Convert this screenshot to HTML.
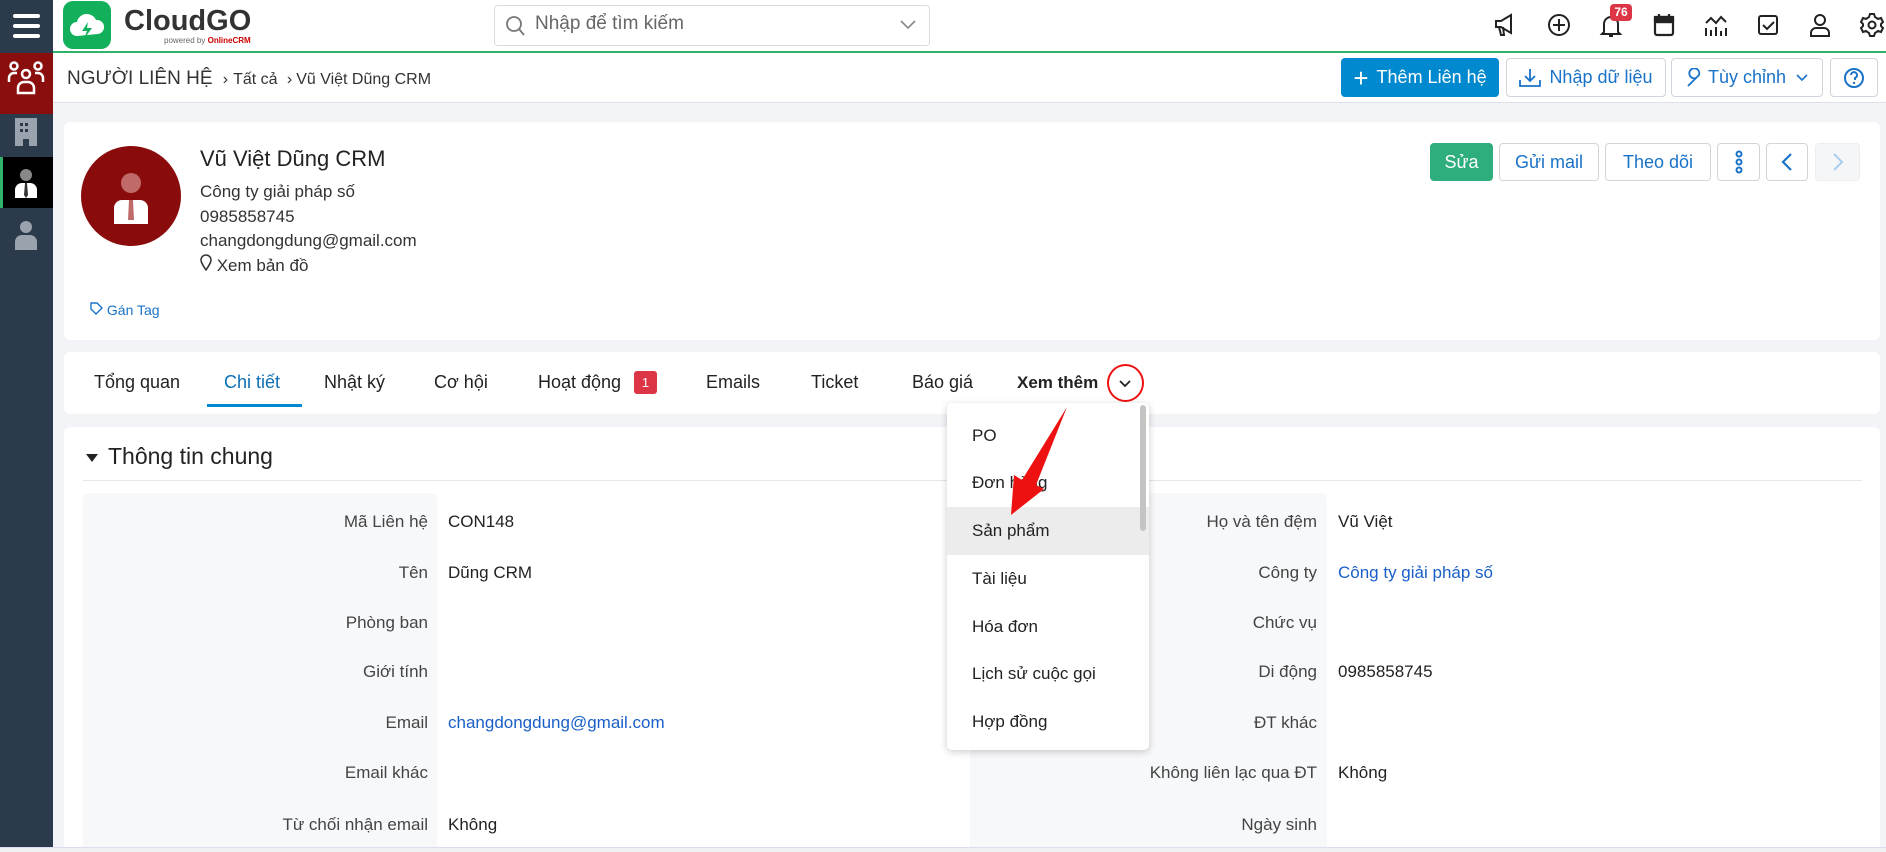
<!DOCTYPE html>
<html><head><meta charset="utf-8"><style>
*{box-sizing:border-box;margin:0;padding:0}
body{width:1886px;height:852px;overflow:hidden;background:#f2f4f7;font-family:"Liberation Sans","Noto Sans CJK SC",sans-serif;color:#222;position:relative}
.a{position:absolute}
.side{left:0;top:0;width:53px;height:852px;background:#2c3b4b}
.top{left:53px;top:0;width:1833px;height:53px;background:#fff;border-bottom:2px solid #2fb36b}
.crumb{left:53px;top:53px;width:1833px;height:50px;background:#fff;border-bottom:1px solid #dde1e6}
.btn{position:absolute;border:1px solid #d0d5db;border-radius:4px;background:#fff;color:#1a73c8;font-size:18px;display:flex;align-items:center;justify-content:center}
.card{position:absolute;background:#fff;border-radius:6px;left:64px;width:1816px}
.tab{position:absolute;top:372px;font-size:18px;color:#222}
.lab{position:absolute;font-size:17px;color:#444;text-align:right}
.val{position:absolute;font-size:17px;color:#222}
.dd{position:absolute;font-size:17px;color:#222;left:972px}
.ic{position:absolute;top:13px}
</style></head><body>
<div class="a side"></div>
<div class="a" style="left:13px;top:14px;width:27px;height:4px;background:#fff;border-radius:2px"></div>
<div class="a" style="left:13px;top:24px;width:27px;height:4px;background:#fff;border-radius:2px"></div>
<div class="a" style="left:13px;top:34px;width:27px;height:4px;background:#fff;border-radius:2px"></div>
<div class="a" style="left:0;top:53px;width:53px;height:61px;background:#8b0e0e"></div>
<svg class="a" style="left:6px;top:60px" width="40" height="36" viewBox="0 0 40 36" fill="none" stroke="#fff" stroke-width="2.5"><circle cx="8" cy="6" r="3.5"/><circle cx="32" cy="6" r="3.5"/><circle cx="20" cy="14" r="4"/><path d="M3 22v-4a5 5 0 0 1 5-5h3M37 22v-4a5 5 0 0 0-5-5h-3M12 33v-5a6 6 0 0 1 6-6h4a6 6 0 0 1 6 6v5z"/></svg>
<svg class="a" style="left:15px;top:118px" width="22" height="28" viewBox="0 0 22 28"><rect x="0" y="0" width="22" height="28" fill="#9aa3ad"/><g fill="#2c3b4b"><rect x="5" y="5" width="3" height="3"/><rect x="10" y="5" width="3" height="3"/><rect x="5" y="11" width="3" height="3"/><rect x="10" y="11" width="3" height="3"/><rect x="8" y="21" width="6" height="7"/></g></svg>
<div class="a" style="left:0;top:157px;width:53px;height:51px;background:#000;border-left:3px solid #2fb36b"></div>
<svg class="a" style="left:14px;top:168px" width="24" height="30" viewBox="0 0 24 30"><circle cx="12" cy="7" r="6" fill="#888"/><path d="M1 30v-8a7 7 0 0 1 7-7h8a7 7 0 0 1 7 7v8z" fill="#fff"/><path d="M11 15h2l1 12-2 3-2-3z" fill="#333"/></svg>
<svg class="a" style="left:14px;top:220px" width="24" height="30" viewBox="0 0 24 30" fill="#9aa3ad"><circle cx="12" cy="7" r="6"/><path d="M1 30v-8a7 7 0 0 1 7-7h8a7 7 0 0 1 7 7v8z"/></svg>

<div class="a top"></div>
<div class="a" style="left:63px;top:1px;width:48px;height:48px;background:#12b05a;border-radius:10px"></div>
<svg class="a" style="left:68px;top:10px" width="38" height="30" viewBox="0 0 38 30"><path d="M9 26a7 7 0 0 1 0-14 10 10 0 0 1 19-2 7 7 0 0 1 2 14" fill="#fff"/><path d="M20 12l-6 9h5l-3 8 8-11h-5z" fill="#12b05a"/></svg>
<div class="a" style="left:124px;top:5px;font-size:29px;font-weight:bold;color:#333">CloudGO</div>
<div class="a" style="left:164px;top:36px;font-size:8px;color:#666">powered by <span style="color:#c00;font-weight:bold">OnlineCRM</span></div>
<div class="a" style="left:494px;top:5px;width:436px;height:41px;border:1px solid #d8dce1;border-radius:4px;background:#fff"></div>
<svg class="a" style="left:505px;top:15px" width="20" height="22" fill="none" stroke="#777" stroke-width="1.8"><circle cx="9" cy="9" r="7"/><path d="M14 14l5 6"/></svg>
<div class="a" style="left:535px;top:13px;font-size:19px;color:#666">Nhập để tìm kiếm</div>
<svg class="a" style="left:900px;top:20px" width="16" height="10" fill="none" stroke="#888" stroke-width="1.6"><path d="M1 1l7 7 7-7"/></svg>
<svg class="ic" style="left:1494px" width="22" height="24" fill="none" stroke="#222" stroke-width="2"><path d="M2 8h5l10-6v18L7 14H2zM5 14l2 8h3l-1-8"/></svg>
<svg class="ic" style="left:1547px" width="24" height="24" fill="none" stroke="#222" stroke-width="2"><circle cx="12" cy="12" r="10"/><path d="M12 6v12M6 12h12"/></svg>
<svg class="ic" style="left:1599px" width="24" height="26" fill="none" stroke="#222" stroke-width="2"><path d="M5 19V11a7 7 0 0 1 14 0v8l2 2H3zM10 23h4"/></svg>
<div class="a" style="left:1610px;top:4px;width:22px;height:17px;background:#dc3545;border-radius:4px;color:#fff;font-size:12px;font-weight:bold;text-align:center;line-height:17px">76</div>
<svg class="ic" style="left:1653px" width="22" height="24" fill="none" stroke="#222" stroke-width="2.2"><rect x="2" y="4" width="18" height="18" rx="2"/><path d="M2 9h18M6 1v4M16 1v4"/><rect x="2" y="4" width="18" height="5" fill="#222"/></svg>
<svg class="ic" style="left:1704px" width="24" height="24" fill="none" stroke="#222" stroke-width="2"><path d="M2 23v-8M7 23v-6M12 23v-9M17 23v-5M22 23v-8M2 10l5-5 5 5 5-6 5 5"/></svg>
<svg class="ic" style="left:1757px" width="22" height="24" fill="none" stroke="#222" stroke-width="2"><rect x="2" y="3" width="18" height="18" rx="2"/><path d="M6 12l4 4 7-7"/></svg>
<svg class="ic" style="left:1809px" width="22" height="24" fill="none" stroke="#222" stroke-width="2"><circle cx="11" cy="7" r="5"/><path d="M2 23v-3a5 5 0 0 1 5-5h8a5 5 0 0 1 5 5v3z"/></svg>
<svg class="ic" style="left:1860px" width="24" height="24" fill="none" stroke="#222" stroke-width="2"><circle cx="12" cy="12" r="3.5"/><path d="M10 1h4l1 3 3 2 3-1 2 4-2 2v2l2 2-2 4-3-1-3 2-1 3h-4l-1-3-3-2-3 1-2-4 2-2v-2L1 9l2-4 3 1 3-2z"/></svg>

<div class="a crumb"></div>
<div class="a" style="left:67px;top:68px;font-size:19px;color:#333">NGƯỜI LIÊN HỆ <span style="font-size:16px;margin:0 5px">›</span><span style="font-size:16px">Tất cả</span> <span style="font-size:16px;margin:0 4px">›</span><span style="font-size:16px">Vũ Việt Dũng CRM</span></div>
<div class="btn" style="left:1341px;top:58px;width:158px;height:39px;background:#0089cf;border-color:#0089cf;color:#fff"><span style="font-size:26px;margin-right:8px;line-height:1">+</span>Thêm Liên hệ</div>
<div class="btn" style="left:1506px;top:58px;width:160px;height:39px"><svg width="22" height="20" fill="none" stroke="#1a73c8" stroke-width="1.8" style="margin-right:8px"><path d="M11 1v12M6 8l5 5 5-5M1 12v6h20v-6"/></svg>Nhập dữ liệu</div>
<div class="btn" style="left:1671px;top:58px;width:152px;height:39px"><svg width="20" height="20" fill="none" stroke="#1a73c8" stroke-width="1.8" style="margin-right:2px"><path d="M2 18l8-8a5 5 0 1 1 3-3L5 15z"/></svg>Tùy chỉnh&nbsp;&nbsp;<svg width="12" height="8" fill="none" stroke="#1a73c8" stroke-width="1.6"><path d="M1 1l5 5 5-5"/></svg></div>
<div class="btn" style="left:1830px;top:58px;width:48px;height:39px"><svg width="22" height="22" fill="none" stroke="#1a73c8" stroke-width="2"><circle cx="11" cy="11" r="9"/><path d="M8 8a3 3 0 1 1 4 3v2M11 15v2"/></svg></div>

<div class="card" style="top:122px;height:218px"></div>
<div class="a" style="left:81px;top:146px;width:100px;height:100px;border-radius:50%;background:#8a0b0b"></div>
<svg class="a" style="left:113px;top:170px" width="36" height="54"><circle cx="18" cy="13" r="10" fill="#c06a6a"/><path d="M1 54V38a8 8 0 0 1 8-8h18a8 8 0 0 1 8 8v16z" fill="#fff"/><path d="M16 30h4l1 20h-6z" fill="#c06a6a"/></svg>
<div class="a" style="left:200px;top:146px;font-size:22px;color:#222">Vũ Việt Dũng CRM</div>
<div class="a" style="left:200px;top:180px;font-size:17px;line-height:24.5px;color:#333">Công ty giải pháp số<br>0985858745<br>changdongdung@gmail.com<br><svg width="12" height="17" fill="none" stroke="#333" stroke-width="1.5"><path d="M6 16C2 10 1 8 1 6a5 5 0 0 1 10 0c0 2-1 4-5 10z"/></svg> Xem bản đồ</div>
<div class="a" style="left:90px;top:302px;font-size:14px;color:#1a73c8"><svg width="13" height="13" fill="none" stroke="#1a73c8" stroke-width="1.4"><path d="M1 1h6l5 5-6 6-5-5z"/></svg> Gán Tag</div>
<div class="btn" style="left:1430px;top:143px;width:63px;height:38px;background:#2fae7d;border-color:#2fae7d;color:#fff">Sửa</div>
<div class="btn" style="left:1499px;top:143px;width:100px;height:38px">Gửi mail</div>
<div class="btn" style="left:1605px;top:143px;width:106px;height:38px">Theo dõi</div>
<div class="btn" style="left:1717px;top:143px;width:43px;height:38px"><svg width="8" height="24" fill="none" stroke="#1a73c8" stroke-width="2"><circle cx="4" cy="4" r="2.5"/><circle cx="4" cy="12" r="2.5"/><circle cx="4" cy="20" r="2.5"/></svg></div>
<div class="btn" style="left:1766px;top:143px;width:42px;height:38px"><svg width="12" height="18" fill="none" stroke="#1a73c8" stroke-width="2.2"><path d="M10 1L2 9l8 8"/></svg></div>
<div class="btn" style="left:1815px;top:143px;width:45px;height:38px;background:#f5f6f8;border-color:#eee"><svg width="12" height="18" fill="none" stroke="#a8cdee" stroke-width="2"><path d="M2 1l8 8-8 8"/></svg></div>

<div class="card" style="top:352px;height:62px"></div>
<div class="tab" style="left:94px">Tổng quan</div>
<div class="tab" style="left:224px;color:#0a6fb5">Chi tiết</div>
<div class="a" style="left:207px;top:404px;width:95px;height:3px;background:#0089cf"></div>
<div class="tab" style="left:324px">Nhật ký</div>
<div class="tab" style="left:434px">Cơ hội</div>
<div class="tab" style="left:538px">Hoạt động</div>
<div class="a" style="left:634px;top:371px;width:23px;height:23px;border-radius:3px;background:#dc3545;color:#fff;font-size:13px;text-align:center;line-height:23px">1</div>
<div class="tab" style="left:706px">Emails</div>
<div class="tab" style="left:811px">Ticket</div>
<div class="tab" style="left:912px">Báo giá</div>
<div class="tab" style="left:1017px;font-weight:bold;font-size:17px;top:373px">Xem thêm</div>
<div class="a" style="left:1107px;top:364px;width:37px;height:38px;border:2px solid #e11;border-radius:50%"></div>
<svg class="a" style="left:1119px;top:380px" width="12" height="8" fill="none" stroke="#222" stroke-width="1.8"><path d="M1 1l5 5 5-5"/></svg>

<div class="card" style="top:427px;height:425px"></div>
<div class="a" style="left:86px;top:454px;width:0;height:0;border-left:6px solid transparent;border-right:6px solid transparent;border-top:8px solid #222"></div>
<div class="a" style="left:108px;top:443px;font-size:23px;color:#222">Thông tin chung</div>
<div class="a" style="left:83px;top:480px;width:1779px;height:1px;background:#e4e7eb"></div>
<div class="a" style="left:83px;top:493px;width:354px;height:359px;background:#f7f8fa;border-radius:6px 6px 0 0"></div>
<div class="a" style="left:970px;top:493px;width:357px;height:359px;background:#f7f8fa;border-radius:6px 6px 0 0"></div>
<div class="lab" style="left:83px;width:345px;top:512px">Mã Liên hệ</div><div class="val" style="left:448px;top:512px">CON148</div>
<div class="lab" style="left:83px;width:345px;top:563px">Tên</div><div class="val" style="left:448px;top:563px">Dũng CRM</div>
<div class="lab" style="left:83px;width:345px;top:613px">Phòng ban</div>
<div class="lab" style="left:83px;width:345px;top:662px">Giới tính</div>
<div class="lab" style="left:83px;width:345px;top:713px">Email</div><div class="val" style="left:448px;top:713px;color:#1a5fc8">changdongdung@gmail.com</div>
<div class="lab" style="left:83px;width:345px;top:763px">Email khác</div>
<div class="lab" style="left:83px;width:345px;top:815px">Từ chối nhận email</div><div class="val" style="left:448px;top:815px">Không</div>
<div class="lab" style="left:970px;width:347px;top:512px">Họ và tên đệm</div><div class="val" style="left:1338px;top:512px">Vũ Việt</div>
<div class="lab" style="left:970px;width:347px;top:563px">Công ty</div><div class="val" style="left:1338px;top:563px;color:#1a5fc8">Công ty giải pháp số</div>
<div class="lab" style="left:970px;width:347px;top:613px">Chức vụ</div>
<div class="lab" style="left:970px;width:347px;top:662px">Di động</div><div class="val" style="left:1338px;top:662px">0985858745</div>
<div class="lab" style="left:970px;width:347px;top:713px">ĐT khác</div>
<div class="lab" style="left:970px;width:347px;top:763px">Không liên lạc qua ĐT</div><div class="val" style="left:1338px;top:763px">Không</div>
<div class="lab" style="left:970px;width:347px;top:815px">Ngày sinh</div>
<div class="a" style="left:0;top:847px;width:1886px;height:5px;background:#eef0f3;border-top:1px solid #dde"></div>

<div class="a" style="left:947px;top:403px;width:202px;height:347px;background:#fff;border-radius:5px;box-shadow:0 2px 8px rgba(0,0,0,.2)"></div>
<div class="a" style="left:947px;top:507px;width:202px;height:48px;background:#ececec"></div>
<div class="a" style="left:1140px;top:405px;width:6px;height:126px;background:#c4c4c4;border-radius:3px"></div>
<div class="dd" style="top:426px">PO</div>
<div class="dd" style="top:473px">Đơn hàng</div>
<div class="dd" style="top:521px">Sản phẩm</div>
<div class="dd" style="top:569px">Tài liệu</div>
<div class="dd" style="top:617px">Hóa đơn</div>
<div class="dd" style="top:664px">Lịch sử cuộc gọi</div>
<div class="dd" style="top:712px">Hợp đồng</div>
<svg class="a" style="left:1000px;top:405px" width="75" height="112"><path d="M67 2L36 80l8 4-33 26 3-40 8 5z" fill="#ee1111"/></svg>
</body></html>
